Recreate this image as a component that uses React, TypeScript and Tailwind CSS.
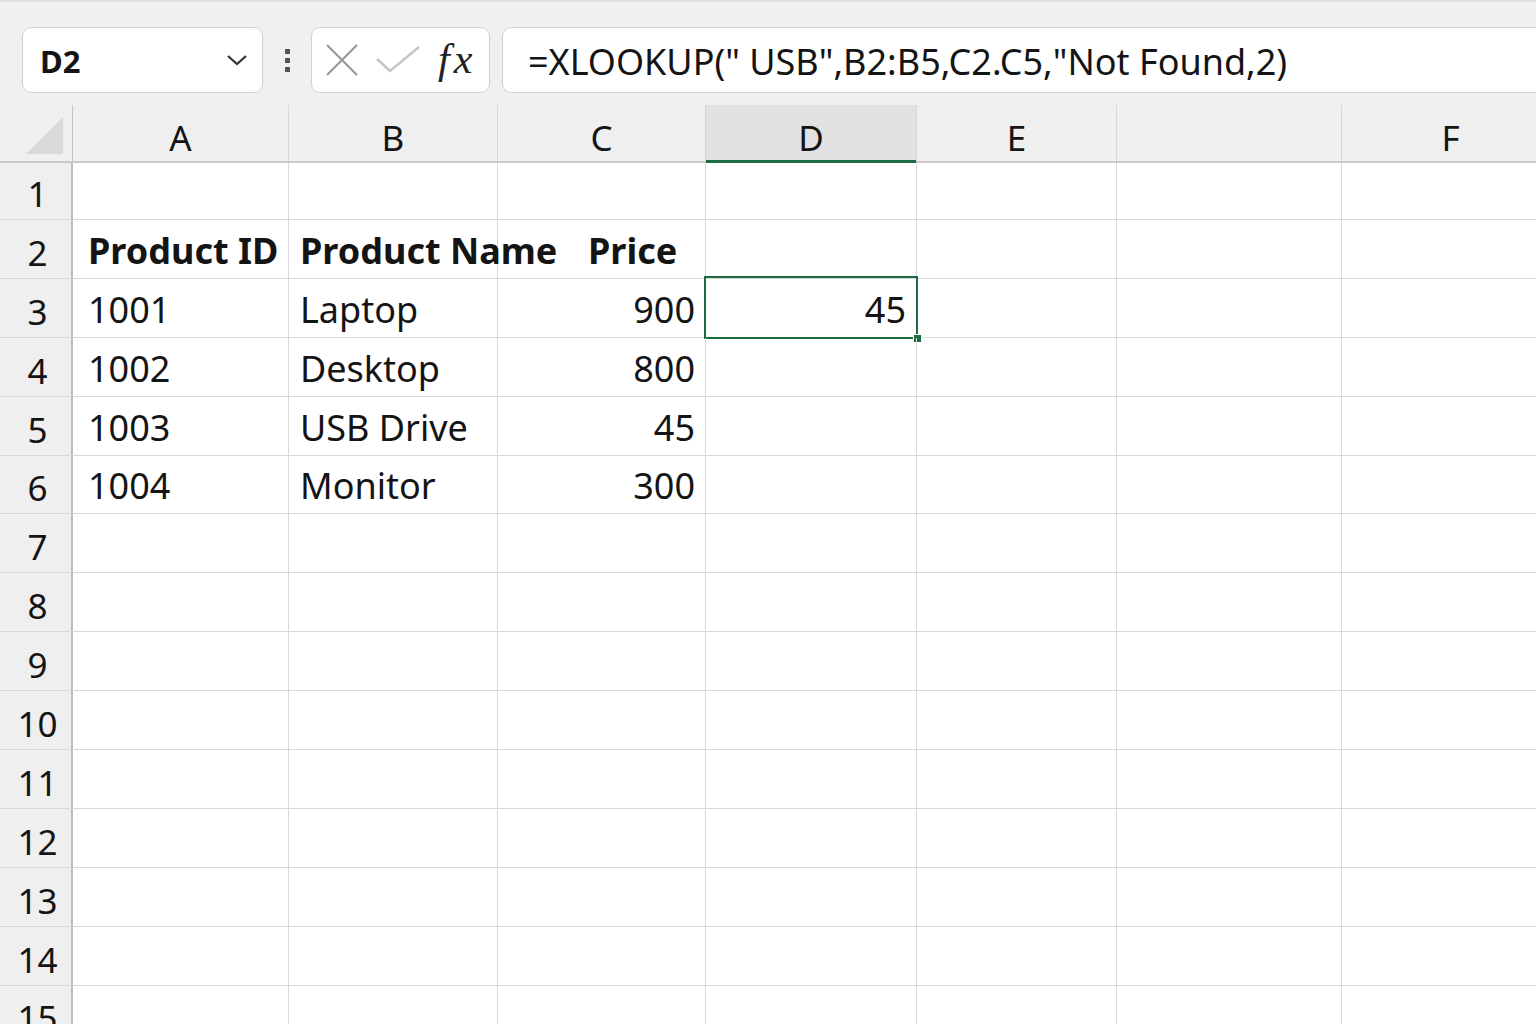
import React from "react";

const cols = ["A", "B", "C", "D", "E", "", "F"];
const colW = [216, 209, 208, 211, 200, 225, 218];

type Cell = { t: string; bold?: boolean; right?: boolean; pad?: string };

const data: Record<number, Record<number, Cell>> = {
  2: {
    0: { t: "Product ID", bold: true },
    1: { t: "Product Name", bold: true },
    2: { t: "Price", bold: true, pad: "pl-[90px]" },
  },
  3: { 0: { t: "1001" }, 1: { t: "Laptop" }, 2: { t: "900", right: true }, 3: { t: "45", right: true } },
  4: { 0: { t: "1002" }, 1: { t: "Desktop" }, 2: { t: "800", right: true } },
  5: { 0: { t: "1003" }, 1: { t: "USB Drive" }, 2: { t: "45", right: true } },
  6: { 0: { t: "1004" }, 1: { t: "Monitor" }, 2: { t: "300", right: true } },
};

const font = { fontFamily: '"Noto Sans", "Open Sans", sans-serif' };

export default function App() {
  const rows = Array.from({ length: 15 }, (_, i) => i + 1);
  return (
    <div
      className="w-[1536px] h-[1024px] overflow-hidden bg-white text-[#141414] relative"
      style={font}
    >
      {/* Toolbar */}
      <div className="h-[105px] bg-[#f0f0f0] border-t-2 border-[#e2e2e2] flex items-start pt-[25px] pl-[22px]">
        <div className="w-[241px] h-[66px] bg-white border border-[#d2d2d2] rounded-[9px] flex items-center pl-[17px] pr-[14px] justify-between">
          <span className="text-[31px] font-bold leading-none mt-[3px]">D2</span>
          <svg width="22" height="14" viewBox="0 0 22 14">
            <polyline points="2,3 11,11 20,3" fill="none" stroke="#333" strokeWidth="2.2" />
          </svg>
        </div>
        <div className="w-[48px] h-[66px] flex flex-col items-center justify-center gap-[4px]">
          <div className="w-[5px] h-[5px] bg-[#555]" />
          <div className="w-[5px] h-[5px] bg-[#555]" />
          <div className="w-[5px] h-[5px] bg-[#555]" />
        </div>
        <div className="w-[179px] h-[66px] bg-white border border-[#d2d2d2] rounded-[9px] flex items-center pl-[13px]">
          <svg width="34" height="34" viewBox="0 0 34 34">
            <path d="M2 2 L32 32 M32 2 L2 32" stroke="#9a9a9a" strokeWidth="2.2" fill="none" />
          </svg>
          <svg width="46" height="30" viewBox="0 0 46 30" className="ml-[16px]">
            <polyline points="2,14 15,26 44,2" fill="none" stroke="#c4c4c4" strokeWidth="2.4" />
          </svg>
          <span
            className="ml-[17px] text-[42px] italic leading-none text-[#222] mb-[2px] tracking-[4px]"
            style={{ fontFamily: '"Liberation Serif", "DejaVu Serif", serif' }}
          >
            fx
          </span>
        </div>
        <div className="ml-[12px] flex-1 h-[66px] bg-white border border-[#d2d2d2] border-r-0 rounded-l-[9px] flex items-center pl-[25px]">
          <span className="text-[36px] leading-none whitespace-pre mt-[4px]">
            =XLOOKUP(" USB",B2:B5,C2.C5,"Not Found,2)
          </span>
        </div>
      </div>

      {/* Column header */}
      <div className="flex h-[58px] bg-[#efefef] border-b-2 border-[#c9c9c9]">
        <div className="w-[73px] shrink-0 border-r border-[#c4c4c4] relative">
          <svg width="38" height="38" viewBox="0 0 38 38" className="absolute left-[26px] top-[12px]">
            <polygon points="37,0 37,37 0,37" fill="#d9d9d9" />
          </svg>
        </div>
        {cols.map((c, i) => (
          <div
            key={i}
            style={{ width: colW[i] }}
            className={`shrink-0 flex items-end justify-center pb-[6px] text-[35px] leading-none border-r border-[#d6d6d6] relative ${
              i === 3 ? "bg-[#e2e2e2]" : ""
            }`}
          >
            {c}
            {i === 3 && <div className="absolute left-0 right-0 bottom-[-2px] h-[3px] bg-[#1e6b41]" />}
          </div>
        ))}
      </div>

      {/* Rows */}
      {rows.map((r) => (
        <div
          key={r}
          className={`flex border-b border-[#d8d8d8] ${r === 1 ? "h-[57px]" : "h-[58.9px]"}`}
        >
          <div className="w-[73px] shrink-0 bg-[#efefef] border-r-2 border-[#bdbdbd] flex items-end justify-center pl-[4px] pb-[8px] text-[35px] leading-none">
            {r}
          </div>
          {colW.map((w, ci) => {
            const cell = data[r]?.[ci];
            const pad = cell?.right
              ? "justify-end pr-[10px]"
              : cell?.pad
              ? cell.pad
              : ci === 1
              ? "pl-[11px]"
              : "pl-[15px]";
            return (
              <div
                key={ci}
                style={{ width: w }}
                className={`shrink-0 border-r border-[#d8d8d8] flex items-end pb-[9px] text-[36px] leading-none whitespace-nowrap relative ${pad} ${
                  cell?.bold ? "font-bold" : ""
                } ${ci === 1 && r === 2 ? "z-10" : ""}`}
              >
                {cell?.t}
                {r === 3 && ci === 3 && (
                  <>
                    <div className="absolute left-[-2px] top-[-3px] right-[-2px] bottom-[-2px] border-2 border-[#1e6b41]" />
                    <div className="absolute right-[-6px] bottom-[-6px] w-[9px] h-[9px] bg-[#1e6b41] border border-white" />
                  </>
                )}
              </div>
            );
          })}
        </div>
      ))}
    </div>
  );
}
